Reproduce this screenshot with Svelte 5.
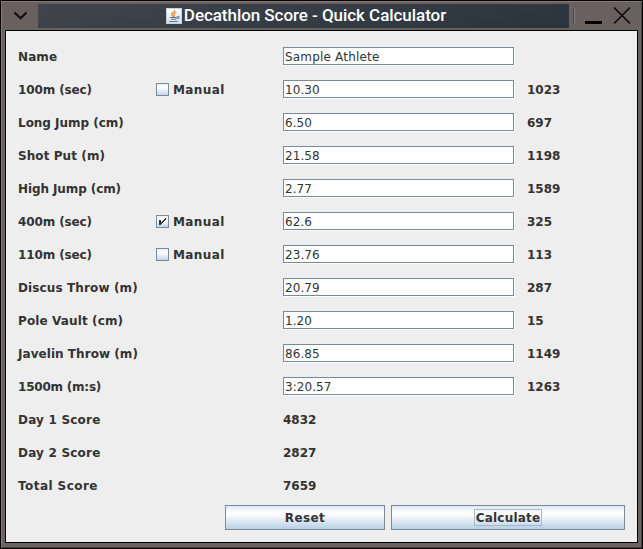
<script>
  let rows = $state([
    { label: 'Name', tracking: 0.1, value: 'Sample Athlete', score: '' },
    { label: '100m (sec)', tracking: -0.12, manual: false, value: '10.30', score: '1023' },
    { label: 'Long Jump (cm)', tracking: -0.02, value: '6.50', score: '697' },
    { label: 'Shot Put (m)', tracking: 0.08, value: '21.58', score: '1198' },
    { label: 'High Jump (cm)', tracking: -0.1, value: '2.77', score: '1589' },
    { label: '400m (sec)', tracking: -0.12, manual: true, value: '62.6', score: '325' },
    { label: '110m (sec)', tracking: -0.12, manual: false, value: '23.76', score: '113' },
    { label: 'Discus Throw (m)', tracking: 0.12, value: '20.79', score: '287' },
    { label: 'Pole Vault (cm)', tracking: 0.12, value: '1.20', score: '15' },
    { label: 'Javelin Throw (m)', tracking: 0.05, value: '86.85', score: '1149' },
    { label: '1500m (m:s)', tracking: -0.22, value: '3:20.57', score: '1263' }
  ]);
  const totals = [
    ['Day 1 Score', '4832', 0.2],
    ['Day 2 Score', '2827', 0.2],
    ['Total Score', '7659', 0.44]
  ];
</script>

<div class="window">
  <header>
    <svg class="menu" width="36" height="26" viewBox="0 0 36 26">
      <path d="M12.5 8.5 L18.5 14.2 L24.5 8.5" fill="none" stroke="#111" stroke-width="2.2" />
    </svg>
    <div class="title">
      <svg width="16" height="16" viewBox="0 0 16 16">
        <defs>
          <linearGradient id="tile" x2="0" y2="1">
            <stop offset="0" stop-color="#fff" />
            <stop offset="1" stop-color="#d5dde3" />
          </linearGradient>
        </defs>
        <rect x=".5" y=".5" width="15" height="15" fill="url(#tile)" stroke="#c3d3df" />
        <path d="M8.8 2 C9.5 4 5 5 5.7 6.5 C6 7.5 7.4 8 7.3 9 M10.4 4.3 C8.5 5 7.3 5.8 8.2 7 C8.8 7.8 8.2 8.5 7.8 9" fill="none" stroke="#ee8427" stroke-width="1.2" />
        <path d="M4 9.5 H11 M5 11.3 H10.3 M11 8.7 C14 8 13.5 10.7 10.8 11 M3.3 13.5 H11.7" fill="none" stroke="#55799a" stroke-width="1.1" />
      </svg>
      <span>Decathlon Score - Quick Calculator</span>
    </div>
    <svg class="controls" width="68" height="26" viewBox="0 0 68 26">
      <path d="M4.5 4V20" stroke="#4d4646" />
      <path d="M5.5 4V20" stroke="#857b7b" />
      <rect x="16" y="17" width="17" height="3" fill="#000" />
      <path d="M45 3.5 L61 19.5 M61 3.5 L45 19.5" stroke="#0b0b0b" stroke-width="1.6" />
    </svg>
  </header>
  <main>
    {#each rows as row}
      <div class="row">
        <span class="label" style:letter-spacing="{row.tracking}px">{row.label}</span>
        <div class="option">
          {#if row.manual !== undefined}
            <label>
              <input type="checkbox" bind:checked={row.manual} />
              <svg class="box" width="13" height="13" viewBox="0 0 13 13">
                {#if row.manual}
                  <g fill="#333" shape-rendering="crispEdges">
                    <rect x="3" y="5" width="2" height="5" />
                    <path d="M5 7H6V6H7V5H8V4H9V3H10V5H9V6H8V7H7V8H6V9H5Z" />
                  </g>
                {/if}
              </svg>
              <span>Manual</span>
            </label>
          {/if}
        </div>
        <input class="field" class:name={row.label === 'Name'} type="text" bind:value={row.value} spellcheck="false" />
        <span class="score">{row.score}</span>
      </div>
    {/each}
    {#each totals as [name, points, tracking]}
      <div class="row">
        <span class="label" style:letter-spacing="{tracking}px">{name}</span>
        <div class="option"></div>
        <span class="score">{points}</span>
      </div>
    {/each}
    <div class="buttons">
      <button class="reset"><span>Reset</span></button>
      <button class="calculate"><span>Calculate</span></button>
    </div>
  </main>
</div>

<style>
  .window {
    box-sizing: border-box;
    width: 643px;
    height: 549px;
    border: 1px solid #000;
    background: #696060;
    box-shadow: inset 1px 1px #857b7b, inset -1px -1px #494343;
    padding: 1px 4px 5px;
    display: flex;
    flex-direction: column;
  }
  header {
    display: flex;
    height: 28px;
    flex: none;
    align-items: flex-start;
    padding-top: 2px;
    box-sizing: border-box;
    margin-left: -3px;
    margin-right: -4px;
  }
  header svg { display: block; flex: none; }
  .title {
    width: 531px;
    height: 24px;
    background: linear-gradient(168deg, #42454b, #353c45 50%, #2a343d);
    display: flex;
    align-items: center;
    justify-content: center;
    box-sizing: border-box;
    padding-left: 5px;
    gap: 2px;
    color: #fff;
    font: 500 17px/22px Roboto, sans-serif;
    letter-spacing: -0.05px;
    white-space: nowrap;
  }
  .title span { height: 24px; }
  main {
    box-sizing: border-box;
    flex: 1;
    border: 1px solid #000;
    background: #eee;
    padding: 9px 12px 0;
    font: bold 12px/15px "DejaVu Sans", sans-serif;
    color: #333;
  }
  .row { display: flex; align-items: center; height: 33px; white-space: nowrap; }
  .label { width: 138px; padding-top: 2px; }
  .score { padding-top: 2px; }
  .option { width: 127px; }
  label { display: flex; align-items: center; gap: 4px; }
  label span { padding-top: 2px; letter-spacing: 0.4px; }
  label input { position: absolute; opacity: 0; pointer-events: none; }
  .box {
    box-sizing: border-box;
    outline: 1px solid #7a8a99;
    outline-offset: -1px;
    background: linear-gradient(#e4edf5, #fff 35%, #b8cfe5);
  }
  .field {
    box-sizing: border-box;
    width: 231px;
    height: 18px;
    margin: 0 13px 1px 0;
    padding: 2px 1px 0;
    border: 1px solid #7a8a99;
    outline: none;
    background: #fff;
    box-shadow: 1px 1px #fff;
    font: 12px/14px "DejaVu Sans", sans-serif;
    letter-spacing: 0.06px;
    color: #333;
  }
  .name { letter-spacing: 0.18px; }
  .buttons { display: flex; gap: 6px; margin-left: 207px; margin-top: 3px; }
  button {
    box-sizing: border-box;
    height: 25px;
    padding: 0;
    border: 1px solid #7a8a99;
    border-radius: 0;
    background: linear-gradient(#dde8f3, #fff 30%, #fff 35%, #b8cfe5);
    font: bold 12px/15px "DejaVu Sans", sans-serif;
    color: #333;
  }
  .reset { width: 160px; }
  .calculate { width: 234px; }
  button span { display: inline-block; padding-top: 1px; }
  .reset span { letter-spacing: 0.4px; }
  .calculate span {
    box-sizing: border-box;
    width: 68px;
    height: 17px;
    border: 1px solid #a3b8cc;
    letter-spacing: 0.2px;
  }
</style>
